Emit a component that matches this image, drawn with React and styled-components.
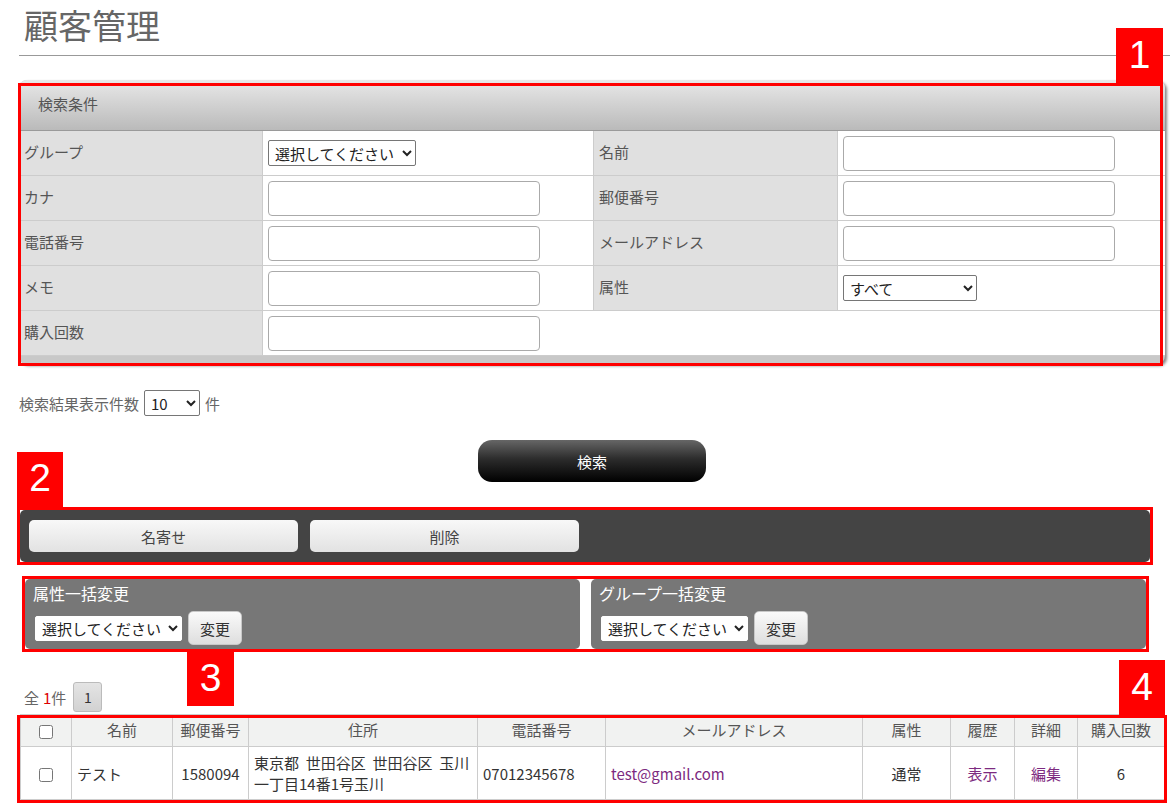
import React from "react";
import styled, { createGlobalStyle } from "styled-components";

const Global = createGlobalStyle`
  html, body { margin: 0; padding: 0; background: #fff; }
  body {
    font-family: "Noto Sans CJK JP", "Noto Sans", sans-serif;
    color: #555;
    font-size: 15px;
  }
  * { box-sizing: border-box; }
`;

const Page = styled.div`
  width: 1170px;
  padding: 0 0 40px 19px;
`;

const TitleBar = styled.div`
  height: 56px;
  border-bottom: 1px solid #999;
  padding: 5px 0 0 5px;
`;

const Title = styled.h1`
  margin: 0;
  font-size: 34px;
  line-height: 40px;
  font-weight: normal;
  color: #666;
`;

const Annot = styled.div`
  position: relative;
  margin: ${(p) => p.$margin};
  &::after {
    content: "";
    position: absolute;
    top: ${(p) => p.$t}px;
    left: ${(p) => p.$l}px;
    right: ${(p) => p.$r}px;
    bottom: ${(p) => p.$b}px;
    border: 3px solid #ff0000;
    pointer-events: none;
    z-index: 2;
  }
`;

const Badge = styled.div`
  position: absolute;
  z-index: 3;
  width: ${(p) => p.$w}px;
  height: ${(p) => p.$h}px;
  top: ${(p) => p.$top}px;
  ${(p) => (p.$left !== undefined ? `left: ${p.$left}px;` : "")}
  ${(p) => (p.$right !== undefined ? `right: ${p.$right}px;` : "")}
  background: #ff0000;
  color: #fff;
  font-family: "Liberation Sans", Arial, sans-serif;
  font-size: 39px;
  line-height: 1;
  display: flex;
  align-items: center;
  justify-content: center;
  padding-bottom: 4px;
`;

const SearchPanel = styled.div`
  background: #c8c8c8;
  border-radius: 8px;
  box-shadow: 2px 2px 3px #888;
  overflow: hidden;
  padding-bottom: 8px;
`;

const PanelHeader = styled.div`
  height: 51px;
  border-bottom: 1px solid #9a9a9a;
  background: linear-gradient(#e8e8e8, #bababa);
  padding-left: 19px;
  line-height: 48px;
  font-size: 15px;
  color: #555;
`;

const FormGrid = styled.div`
  display: grid;
  grid-template-columns: 244px 331px 244px 1fr;
`;

const Cell = styled.div`
  height: 45px;
  border-bottom: 1px solid #ccc;
  border-right: ${(p) => (p.$noRight ? "none" : "1px solid #ccc")};
  background: ${(p) => (p.$label ? "#e0e0e0" : "#fff")};
  padding-left: 5px;
  padding-bottom: ${(p) => (p.$label ? "3px" : "0")};
  display: flex;
  align-items: center;
  color: #555;
  font-size: 15px;
  grid-column: ${(p) => p.$span || "auto"};
`;

const TextInput = styled.input`
  width: 272px;
  height: 35px;
  border: 1px solid #aaa;
  border-radius: 4px;
  background: #fff;
  margin-top: 1px;
`;

const Select = styled.select`
  width: ${(p) => p.$w}px;
  height: ${(p) => p.$h || 26}px;
  font-family: "Noto Sans CJK JP", sans-serif;
  font-size: 15px;
  color: #222;
  background: #fff;
  border: 1px solid ${(p) => p.$border || "#767676"};
  border-radius: 2px;
  padding: 0 0 0 2px;
`;

const CountRow = styled.div`
  margin-top: 26px;
  display: flex;
  align-items: center;
  gap: 5px;
  font-size: 15px;
  color: #666;
  height: 26px;
`;

const ButtonRow = styled.div`
  margin: 24px 5px 0 0;
  display: flex;
  justify-content: center;
`;

const SearchButton = styled.button`
  width: 228px;
  height: 42px;
  border: none;
  border-radius: 14px;
  background: linear-gradient(#666 0%, #2c2c2c 45%, #000 100%);
  color: #fff;
  font-family: "Noto Sans CJK JP", sans-serif;
  font-size: 15px;
  cursor: pointer;
`;

const DarkBar = styled.div`
  background: #444;
  border-radius: 5px;
  padding: 10px 9px;
  display: flex;
  gap: 12px;
`;

const BarButton = styled.button`
  width: 269px;
  height: 32px;
  border: none;
  border-radius: 5px;
  background: linear-gradient(#f8f8f8, #e2e2e2);
  color: #444;
  font-family: "Noto Sans CJK JP", sans-serif;
  font-size: 15px;
`;

const BulkRow = styled.div`
  display: flex;
  gap: 11px;
`;

const BulkPanel = styled.div`
  flex: 1;
  height: 70px;
  background: #777;
  border-radius: 5px;
  padding: 3px 8px 0;
`;

const BulkTitle = styled.div`
  color: #fff;
  font-size: 16px;
  line-height: 22px;
`;

const BulkControls = styled.div`
  margin-top: 7px;
  display: flex;
  align-items: center;
  gap: 6px;
  padding-left: 2px;
`;

const SmallButton = styled.button`
  width: 54px;
  height: 34px;
  border: 1px solid #c8c8c8;
  border-radius: 5px;
  background: linear-gradient(#fafafa, #dedede);
  color: #333;
  font-family: "Noto Sans CJK JP", sans-serif;
  font-size: 15px;
`;

const Pager = styled.div`
  margin: 33px 0 0 5px;
  height: 30px;
  display: flex;
  align-items: center;
  gap: 7px;
  font-size: 15px;
  color: #666;
`;

const Red = styled.span`
  color: #d00;
  margin-left: 4px;
`;

const PageBtn = styled.span`
  width: 29px;
  height: 30px;
  border: 1px solid #bbb;
  border-radius: 3px;
  background: linear-gradient(#e4e4e4, #d2d2d2);
  color: #333;
  font-size: 14px;
  display: flex;
  align-items: center;
  justify-content: center;
`;

const Table = styled.table`
  width: 100%;
  border-collapse: collapse;
  table-layout: fixed;
  font-size: 15px;
`;

const Th = styled.th`
  height: 32px;
  background: #f1f2f1;
  border: 1px solid #ccc;
  font-weight: normal;
  color: #555;
  text-align: center;
  padding: 0 0 2px;
`;

const Td = styled.td`
  height: 53px;
  border: 1px solid #ccc;
  color: #333;
  padding: 0 5px;
  line-height: 21px;
  text-align: ${(p) => p.$align || "left"};
`;

const Link = styled.span`
  color: #7d2a80;
`;

const Check = styled.input`
  width: 14px;
  height: 14px;
  margin: 0;
  vertical-align: middle;
`;

const cols = [51, 101, 76, 229, 128, 257, 88, 64, 63, 87];

export default function App() {
  return (
    <>
      <Global />
      <Page>
        <TitleBar>
          <Title>顧客管理</Title>
        </TitleBar>

        <Annot $margin="24px 5px 0 0" $t={3} $l={-1} $r={2} $b={-2}>
          <Badge $w={47} $h={56} $top={-52} $right={2}>1</Badge>
          <SearchPanel>
            <PanelHeader>検索条件</PanelHeader>
            <FormGrid>
              <Cell $label>グループ</Cell>
              <Cell>
                <Select $w={148} $h={26}>
                  <option>選択してください</option>
                </Select>
              </Cell>
              <Cell $label>名前</Cell>
              <Cell $noRight><TextInput /></Cell>

              <Cell $label>カナ</Cell>
              <Cell><TextInput /></Cell>
              <Cell $label>郵便番号</Cell>
              <Cell $noRight><TextInput /></Cell>

              <Cell $label>電話番号</Cell>
              <Cell><TextInput /></Cell>
              <Cell $label>メールアドレス</Cell>
              <Cell $noRight><TextInput /></Cell>

              <Cell $label>メモ</Cell>
              <Cell><TextInput /></Cell>
              <Cell $label>属性</Cell>
              <Cell $noRight>
                <Select $w={134} $h={26}>
                  <option>すべて</option>
                </Select>
              </Cell>

              <Cell $label>購入回数</Cell>
              <Cell $noRight><TextInput /></Cell>
              <Cell $noRight $span="span 2" />
            </FormGrid>
          </SearchPanel>
        </Annot>

        <CountRow>
          検索結果表示件数
          <Select $w={56} $h={26}>
            <option>10</option>
          </Select>
          件
        </CountRow>

        <ButtonRow>
          <SearchButton>検索</SearchButton>
        </ButtonRow>

        <Annot $margin="28px 20px 0 1px" $t={-3} $l={-3} $r={-3} $b={-3}>
          <Badge $w={46} $h={55} $top={-58} $left={-3}>2</Badge>
          <DarkBar>
            <BarButton>名寄せ</BarButton>
            <BarButton>削除</BarButton>
          </DarkBar>
        </Annot>

        <Annot $margin="17px 24px 0 6px" $t={-3} $l={-3} $r={-3} $b={-3}>
          <Badge $w={47} $h={54} $top={73} $left={162}>3</Badge>
          <BulkRow>
            <BulkPanel>
              <BulkTitle>属性一括変更</BulkTitle>
              <BulkControls>
                <Select $w={147} $h={25} $border="#fff">
                  <option>選択してください</option>
                </Select>
                <SmallButton>変更</SmallButton>
              </BulkControls>
            </BulkPanel>
            <BulkPanel>
              <BulkTitle>グループ一括変更</BulkTitle>
              <BulkControls>
                <Select $w={147} $h={25} $border="#fff">
                  <option>選択してください</option>
                </Select>
                <SmallButton>変更</SmallButton>
              </BulkControls>
            </BulkPanel>
          </BulkRow>
        </Annot>

        <Pager>
          <span>
            全<Red>1</Red>件
          </span>
          <PageBtn>1</PageBtn>
        </Pager>

        <Annot $margin="2px 6px 0 1px" $t={1} $l={-3} $r={-3} $b={-3}>
          <Badge $w={46} $h={57} $top={-54} $right={-1}>4</Badge>
          <Table>
            <colgroup>
              {cols.map((w, i) => (
                <col key={i} style={{ width: w }} />
              ))}
            </colgroup>
            <thead>
              <tr>
                <Th><Check type="checkbox" /></Th>
                <Th>名前</Th>
                <Th>郵便番号</Th>
                <Th>住所</Th>
                <Th>電話番号</Th>
                <Th>メールアドレス</Th>
                <Th>属性</Th>
                <Th>履歴</Th>
                <Th>詳細</Th>
                <Th>購入回数</Th>
              </tr>
            </thead>
            <tbody>
              <tr>
                <Td $align="center"><Check type="checkbox" /></Td>
                <Td>テスト</Td>
                <Td $align="center">1580094</Td>
                <Td>
                  東京都&nbsp; 世田谷区&nbsp; 世田谷区&nbsp; 玉川
                  <br />
                  一丁目14番1号玉川
                </Td>
                <Td>07012345678</Td>
                <Td><Link>test@gmail.com</Link></Td>
                <Td $align="center">通常</Td>
                <Td $align="center"><Link>表示</Link></Td>
                <Td $align="center"><Link>編集</Link></Td>
                <Td $align="center">6</Td>
              </tr>
            </tbody>
          </Table>
        </Annot>
      </Page>
    </>
  );
}
